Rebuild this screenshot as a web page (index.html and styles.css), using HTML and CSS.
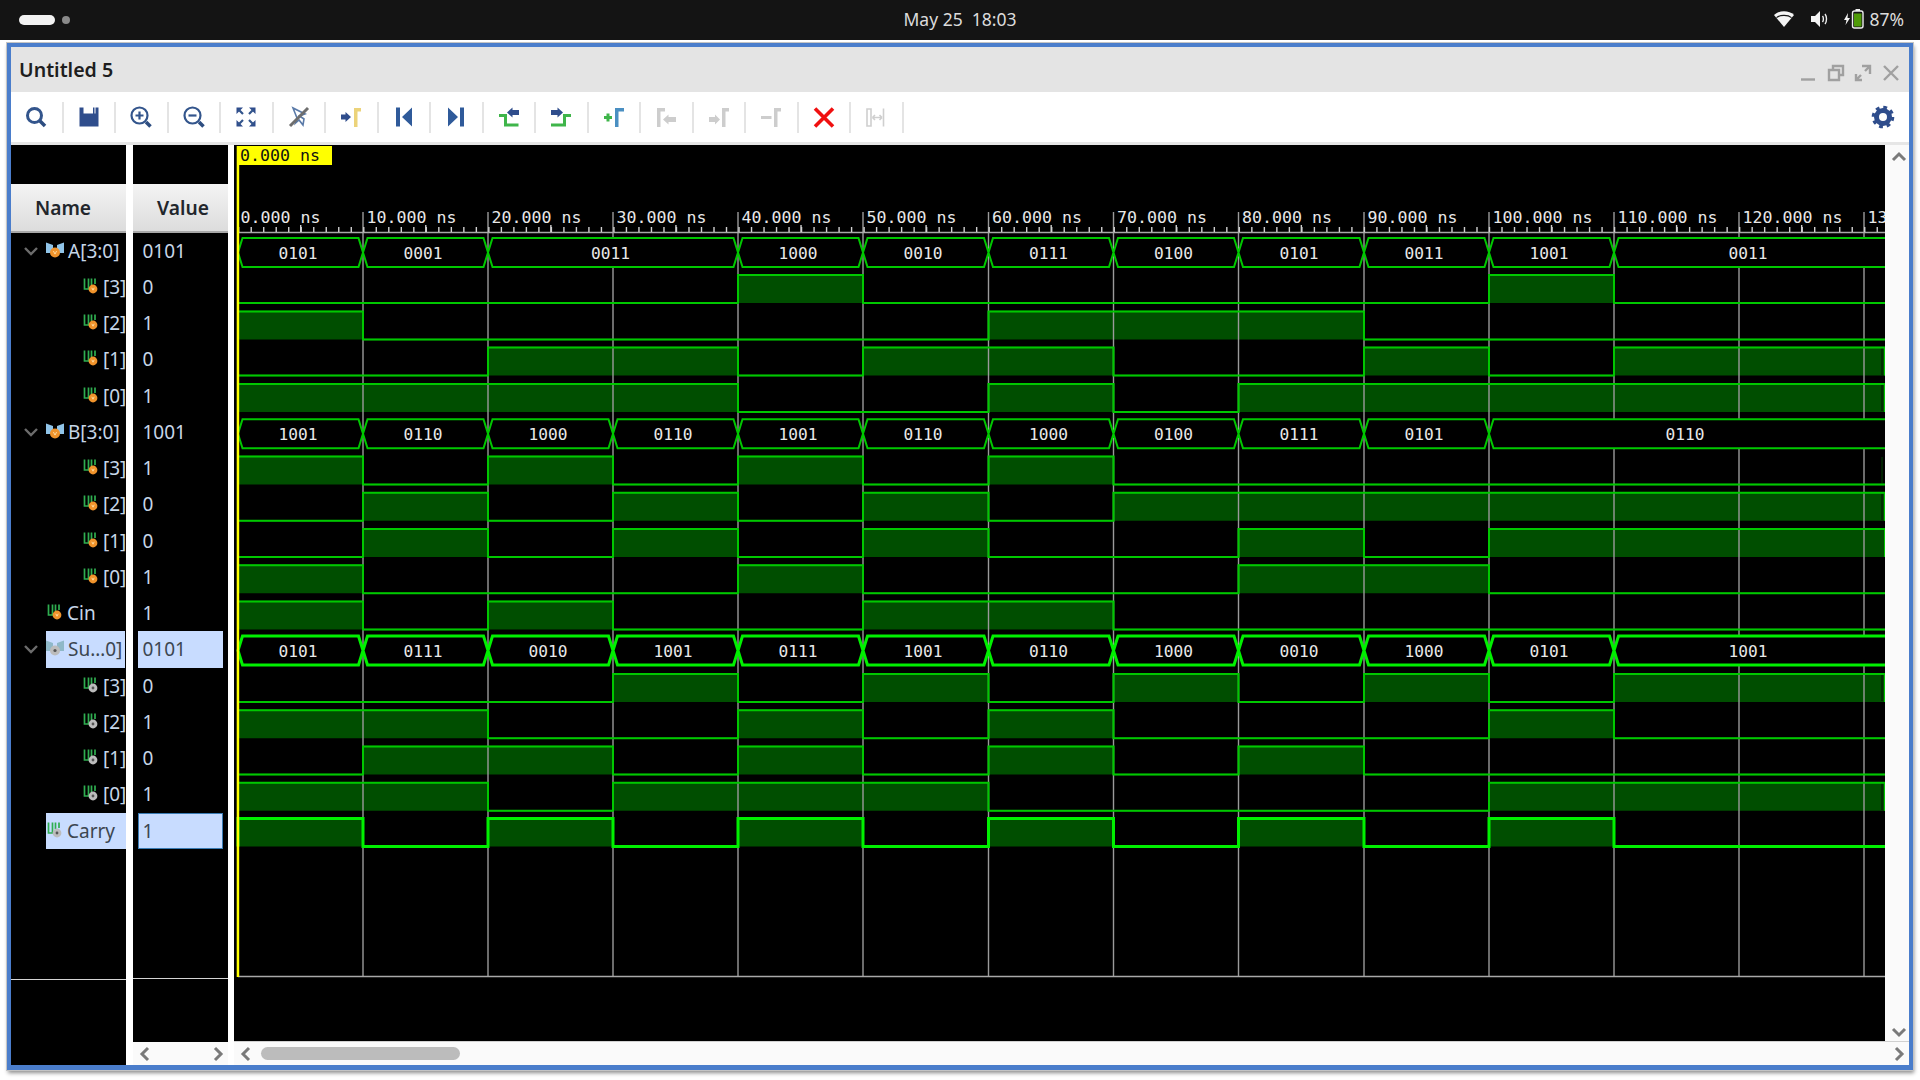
FILE: index.html
```html
<!DOCTYPE html>
<html lang="en">
<head>
<meta charset="utf-8">
<title>Untitled 5</title>
<link rel="stylesheet" href="styles.css">
</head>
<body>
<svg class="defs" aria-hidden="true">
  <symbol id="bus-v" viewBox="0 0 18 16"><path class="ic-wing" d="M0 .5L7 3V11H0ZM18 .5L11 3V11H18Z"/><circle class="ic-orange" cx="9" cy="10.5" r="5"/><path class="ic-mark" d="M7.4 9L9 12.1L10.6 9"/></symbol>
  <symbol id="bus-g" viewBox="0 0 18 16"><path class="ic-wing-g" d="M0 .5L7 3V11H0ZM18 .5L11 3V11H18Z"/><circle class="ic-grey" cx="9" cy="10.5" r="5"/><circle class="ic-dot" cx="9" cy="10.5" r="1.6"/></symbol>
  <symbol id="bit-v" viewBox="0 0 15 16"><path class="ic-green" d="M1.5 .5V11H5.5V.5M8.5 .5V7M12 .5V6"/><circle class="ic-orange" cx="10" cy="11" r="4.4"/><path class="ic-mark" d="M8.8 9.8L10 12.2L11.2 9.8"/></symbol>
  <symbol id="bit-g" viewBox="0 0 15 16"><path class="ic-green" d="M1.5 .5V11H5.5V.5M8.5 .5V7M12 .5V6"/><circle class="ic-grey" cx="10" cy="11" r="4.4"/><circle class="ic-dot" cx="10" cy="11" r="1.4"/></symbol>
  <symbol id="chev" viewBox="0 0 16 16"><path d="M2 5L8 11L14 5"/></symbol>
  <path id="a3" d="M238 0H738V-28H863V0H1489V-28H1614V0H1885"/>
  <path id="a2" d="M238 0V-28H363V0H988.5V-28H1364V0H1885"/>
  <path id="a1" d="M238 0H488V-28H738V0H863V-28H1113.5V0H1364V-28H1489V0H1614V-28H1885V0"/>
  <path id="a0" d="M238 0V-28H738V0H988.5V-28H1113.5V0H1238.5V-28H1885V0"/>
  <path id="b3" d="M238 0V-28H363V0H488V-28H613V0H738V-28H863V0H988.5V-28H1113.5V0H1885"/>
  <path id="b2" d="M238 0H363V-28H488V0H613V-28H738V0H863V-28H988.5V0H1113.5V-28H1885V0"/>
  <path id="b1" d="M238 0H363V-28H488V0H613V-28H738V0H863V-28H988.5V0H1238.5V-28H1364V0H1489V-28H1885V0"/>
  <path id="b0" d="M238 0V-28H363V0H738V-28H863V0H1238.5V-28H1489V0H1885"/>
  <path id="cin" d="M238 0V-28H363V0H488V-28H613V0H863V-28H1113.5V0H1885"/>
  <path id="s3" d="M238 0H613V-28H738V0H863V-28H988.5V0H1113.5V-28H1238.5V0H1364V-28H1489V0H1614V-28H1885V0"/>
  <path id="s2" d="M238 0V-28H488V0H738V-28H863V0H988.5V-28H1113.5V0H1489V-28H1614V0H1885"/>
  <path id="s1" d="M238 0H363V-28H613V0H738V-28H863V0H988.5V-28H1113.5V0H1238.5V-28H1364V0H1885"/>
  <path id="s0" d="M238 0V-28H488V0H613V-28H988.5V0H1489V-28H1885V0"/>
  <path id="carry" d="M238 0V-28H363V0H488V-28H613V0H738V-28H863V0H988.5V-28H1113.5V0H1238.5V-28H1364V0H1489V-28H1614V0H1885"/>
</svg>

<header class="topbar">
  <div class="activities"><span class="pill"></span><span class="dot"></span></div>
  <div class="clock">May 25&nbsp;&nbsp;18:03</div>
  <div class="tray">
    <svg class="tray-wifi" width="20" height="18" viewBox="0 0 20 18"><path class="tray-fill" d="M0 5C5 0 15 0 20 5L10 17Z"/><path class="tray-cut" d="M2.5 7.6C6 4.6 14 4.6 17.5 7.6"/></svg>
    <svg class="tray-sound" width="18" height="20" viewBox="0 0 18 20"><path class="tray-fill" d="M1 7H5L10 2V18L5 13H1Z"/><path class="tray-arc" d="M12.5 7C13.7 8.5 13.7 11.5 12.5 13M15 5C17 7.5 17 12.5 15 15"/></svg>
    <svg class="tray-batt" width="20" height="20" viewBox="0 0 20 20"><path class="tray-fill" d="M4 4L0 11H2.5L1.5 16L6 9H3.5Z"/><rect class="batt-body" x="8.5" y="2" width="10.5" height="17" rx="2"/><rect class="batt-cap" x="11.5" y="0" width="4.5" height="2"/><rect class="batt-level" x="10" y="4.5" width="7.5" height="13"/></svg>
    <span class="tray-text">87%</span>
  </div>
</header>

<main class="window">
  <div class="titlebar">
    <span class="title">Untitled 5</span>
    <div class="winctl">
      <svg width="18" height="18" viewBox="0 0 18 18"><path d="M2 15.5H16"/></svg>
      <svg width="18" height="18" viewBox="0 0 18 18"><path d="M6 6V2H16V11H12M2 6H12V16H2Z"/></svg>
      <svg width="18" height="18" viewBox="0 0 18 18"><path d="M8 2H16V10M16 2L11 7M2 10V16H8M2 16L7 11"/></svg>
      <svg width="18" height="18" viewBox="0 0 18 18"><path d="M2 2L16 16M16 2L2 16"/></svg>
    </div>
  </div>

  <nav class="toolbar">
    <span class="tool"><svg width="24" height="24" viewBox="0 0 24 24"><circle class="st-navy" cx="10.5" cy="10.5" r="7"/><path class="st-navy hv" d="M16 16L21 21"/></svg></span>
    <span class="tool"><svg width="24" height="24" viewBox="0 0 24 24"><path class="fl-navy" d="M2.5 2.5H6.5V8.5H16V2.5H17.5V8.5H18.5V2.5H21.5V21.5H2.5Z"/></svg></span>
    <span class="tool"><svg width="24" height="24" viewBox="0 0 24 24"><circle class="st-navy th" cx="10.5" cy="10.5" r="8"/><path class="st-navy hv" d="M17 17L21.5 21.5"/><path class="st-navy th" d="M6.5 10.5H14.5M10.5 6.5V14.5"/></svg></span>
    <span class="tool"><svg width="24" height="24" viewBox="0 0 24 24"><circle class="st-navy th" cx="10.5" cy="10.5" r="8"/><path class="st-navy hv" d="M17 17L21.5 21.5"/><path class="st-navy th" d="M6.5 10.5H14.5"/></svg></span>
    <span class="tool"><svg width="24" height="24" viewBox="0 0 24 24"><path class="fl-navy" d="M2.5 2.5H9L2.5 9ZM21.5 2.5H15L21.5 9ZM2.5 21.5H9L2.5 15ZM21.5 21.5H15L21.5 15Z"/><path class="st-navy th" d="M4.5 4.5L9 9M19.5 4.5L15 9M4.5 19.5L9 15M19.5 19.5L15 15"/></svg></span>
    <span class="tool"><svg width="24" height="24" viewBox="0 0 24 24"><path class="st-slate" d="M6 3L10 13L8.5 18L12 15L16 20L17 14L12.5 11L18 9Z"/><path class="st-grey-d" d="M3 21L21 3"/></svg></span>
    <span class="tool"><svg width="24" height="24" viewBox="0 0 24 24"><path class="fl-navy" d="M2 9.5H6.5V7L12 12L6.5 17V14.5H2Z"/><path class="fl-yellow" d="M15 22V3H22V6.5H18.5V22Z"/></svg></span>
    <span class="tool"><svg width="24" height="24" viewBox="0 0 24 24"><path class="fl-blue" d="M4 2.5H8V21.5H4ZM20 2.5V21.5L10 12Z"/></svg></span>
    <span class="tool"><svg width="24" height="24" viewBox="0 0 24 24"><path class="fl-blue" d="M20 2.5H16V21.5H20ZM4 2.5V21.5L14 12Z"/></svg></span>
    <span class="tool"><svg width="24" height="24" viewBox="0 0 24 24"><path class="st-lime" d="M2 10.5H8.5V20H21.5"/><path class="fl-navy" d="M10 7.5L15.5 2.5V5H22V10H15.5V12.5Z"/></svg></span>
    <span class="tool"><svg width="24" height="24" viewBox="0 0 24 24"><path class="st-lime" d="M2 20H15.5V10.5H22"/><path class="fl-navy" d="M14 7.5L8.5 2.5V5H2V10H8.5V12.5Z"/></svg></span>
    <span class="tool"><svg width="24" height="24" viewBox="0 0 24 24"><path class="st-lime" d="M2 12.5H10M6 8.5V16.5"/><path class="fl-sky" d="M13 22V3H22V6.5H16.5V22Z"/></svg></span>
    <span class="tool"><svg width="24" height="24" viewBox="0 0 24 24"><path class="fl-off" d="M3 22V3H11V6.5H6.5V22ZM9 14.5L14.5 9.5V12H22V17H14.5V19.5Z"/></svg></span>
    <span class="tool"><svg width="24" height="24" viewBox="0 0 24 24"><path class="fl-off" d="M15 22V3H22V6.5H18.5V22ZM13 14.5L8 9.5V12H2V17H8V19.5Z"/></svg></span>
    <span class="tool"><svg width="24" height="24" viewBox="0 0 24 24"><path class="fl-off" d="M15 22V3H22V6.5H18.5V22ZM2 11H12.5V14H2Z"/></svg></span>
    <span class="tool"><svg width="24" height="24" viewBox="0 0 24 24"><path class="st-red" d="M3 3.5L21 21.5M21 3.5L3 21.5"/></svg></span>
    <span class="tool"><svg width="24" height="24" viewBox="0 0 24 24"><path class="st-off" d="M3 4H7V21H3ZM19.5 3.5V21.5M8.5 12.5H18M8.5 12.5L11 10M8.5 12.5L11 15M18 12.5L15.5 10M18 12.5L15.5 15"/></svg></span>
    <span class="tool-gear"><svg width="24" height="24" viewBox="0 0 24 24"><circle class="gear-ring" cx="12" cy="12" r="6.5"/><circle class="gear-teeth" cx="12" cy="12" r="9.5"/></svg></span>
  </nav>

  <section class="panes">
    <div class="pane pane-name">
      <div class="pane-spacer"></div>
      <div class="head head-name">Name</div>
      <div class="rows">
        <div class="row"><svg class="chev"><use href="#chev"/></svg><div class="cell"><svg class="ic-bus"><use href="#bus-v"/></svg><span>A[3:0]</span></div></div>
        <div class="row"><span class="nochev"></span><div class="cell bit"><svg class="ic-bit"><use href="#bit-v"/></svg><span>[3]</span></div></div>
        <div class="row"><span class="nochev"></span><div class="cell bit"><svg class="ic-bit"><use href="#bit-v"/></svg><span>[2]</span></div></div>
        <div class="row"><span class="nochev"></span><div class="cell bit"><svg class="ic-bit"><use href="#bit-v"/></svg><span>[1]</span></div></div>
        <div class="row"><span class="nochev"></span><div class="cell bit"><svg class="ic-bit"><use href="#bit-v"/></svg><span>[0]</span></div></div>
        <div class="row"><svg class="chev"><use href="#chev"/></svg><div class="cell"><svg class="ic-bus"><use href="#bus-v"/></svg><span>B[3:0]</span></div></div>
        <div class="row"><span class="nochev"></span><div class="cell bit"><svg class="ic-bit"><use href="#bit-v"/></svg><span>[3]</span></div></div>
        <div class="row"><span class="nochev"></span><div class="cell bit"><svg class="ic-bit"><use href="#bit-v"/></svg><span>[2]</span></div></div>
        <div class="row"><span class="nochev"></span><div class="cell bit"><svg class="ic-bit"><use href="#bit-v"/></svg><span>[1]</span></div></div>
        <div class="row"><span class="nochev"></span><div class="cell bit"><svg class="ic-bit"><use href="#bit-v"/></svg><span>[0]</span></div></div>
        <div class="row"><span class="nochev"></span><div class="cell"><svg class="ic-bit ic-top"><use href="#bit-v"/></svg><span>Cin</span></div></div>
        <div class="row"><svg class="chev"><use href="#chev"/></svg><div class="cell sel"><svg class="ic-bus"><use href="#bus-g"/></svg><span>Su…0]</span></div></div>
        <div class="row"><span class="nochev"></span><div class="cell bit"><svg class="ic-bit"><use href="#bit-g"/></svg><span>[3]</span></div></div>
        <div class="row"><span class="nochev"></span><div class="cell bit"><svg class="ic-bit"><use href="#bit-g"/></svg><span>[2]</span></div></div>
        <div class="row"><span class="nochev"></span><div class="cell bit"><svg class="ic-bit"><use href="#bit-g"/></svg><span>[1]</span></div></div>
        <div class="row"><span class="nochev"></span><div class="cell bit"><svg class="ic-bit"><use href="#bit-g"/></svg><span>[0]</span></div></div>
        <div class="row"><span class="nochev"></span><div class="cell sel sel-full"><svg class="ic-bit ic-top"><use href="#bit-g"/></svg><span>Carry</span></div></div>
      </div>
      <div class="pane-foot foot-name"></div>
    </div>

    <div class="pane pane-value">
      <div class="pane-spacer"></div>
      <div class="head head-value">Value</div>
      <div class="rows">
        <div class="vrow"><span class="val">0101</span></div>
        <div class="vrow"><span class="val">0</span></div>
        <div class="vrow"><span class="val">1</span></div>
        <div class="vrow"><span class="val">0</span></div>
        <div class="vrow"><span class="val">1</span></div>
        <div class="vrow"><span class="val">1001</span></div>
        <div class="vrow"><span class="val">1</span></div>
        <div class="vrow"><span class="val">0</span></div>
        <div class="vrow"><span class="val">0</span></div>
        <div class="vrow"><span class="val">1</span></div>
        <div class="vrow"><span class="val">1</span></div>
        <div class="vrow"><span class="val sel">0101</span></div>
        <div class="vrow"><span class="val">0</span></div>
        <div class="vrow"><span class="val">1</span></div>
        <div class="vrow"><span class="val">0</span></div>
        <div class="vrow"><span class="val">1</span></div>
        <div class="vrow"><span class="val sel focus">1</span></div>
      </div>
      <div class="pane-foot foot-value"></div>
      <div class="hscroll hscroll-value">
        <svg class="chv" viewBox="0 0 16 16"><path d="M11 2L5 8L11 14"/></svg>
        <svg class="chv" viewBox="0 0 16 16"><path d="M5 2L11 8L5 14"/></svg>
      </div>
    </div>

    <div class="pane-wave">
      <div class="wave-top">
        <svg class="wave" viewBox="234 145 1651 896" width="1651" height="896">
          <!-- fills -->
          <g class="w-fill">
            <use href="#a3" y="303"/><use href="#a2" y="339.5"/><use href="#a1" y="375.5"/><use href="#a0" y="412"/>
            <use href="#b3" y="484.5"/><use href="#b2" y="520.75"/><use href="#b1" y="557"/><use href="#b0" y="593.25"/>
            <use href="#cin" y="629.5"/>
            <use href="#s3" y="702"/><use href="#s2" y="738.25"/><use href="#s1" y="774.5"/><use href="#s0" y="810.75"/>
            <use href="#carry" y="846.5"/>
          </g>
          <path class="w-tail" d="M1882 348V375M1882 385V411M1882 457V484M1882 494V520M1882 675V701M1882 783V810"/>
          <!-- grid -->
          <path class="w-grid" d="M363 212V976M488 212V976M613 212V976M738 212V976M863 212V976M988.5 212V976M1113.5 212V976M1238.5 212V976M1364 212V976M1489 212V976M1614 212V976M1739 212V976M1864 212V976"/>
          <path class="w-base" d="M238 232.5H1885M238 976.5H1885"/>
          <line class="w-tick" x1="238" x2="1885" y1="229.5" y2="229.5"/>
          <line class="w-tick5" x1="300" x2="1885" y1="228.5" y2="228.5"/>
          <!-- digital traces -->
          <g class="w-line">
            <use href="#a3" y="303"/><use href="#a2" y="339.5"/><use href="#a1" y="375.5"/><use href="#a0" y="412"/>
            <use href="#b3" y="484.5"/><use href="#b2" y="520.75"/><use href="#b1" y="557"/><use href="#b0" y="593.25"/>
            <use href="#cin" y="629.5"/>
            <use href="#s3" y="702"/><use href="#s2" y="738.25"/><use href="#s1" y="774.5"/><use href="#s0" y="810.75"/>
          </g>
          <g class="w-line w-sel"><use href="#carry" y="846.5"/></g>
          <!-- buses -->
          <g class="w-bus" transform="translate(0 252.5)">
            <path d="M238 0l4.5-14.5H358.5l4.5 14.5l-4.5 14.5H242.5ZM363 0l4.5-14.5H483.5l4.5 14.5l-4.5 14.5H367.5ZM488 0l4.5-14.5H733.5l4.5 14.5l-4.5 14.5H492.5ZM738 0l4.5-14.5H858.5l4.5 14.5l-4.5 14.5H742.5ZM863 0l4.5-14.5H984l4.5 14.5l-4.5 14.5H867.5ZM988.5 0l4.5-14.5H1109l4.5 14.5l-4.5 14.5H993ZM1113.5 0l4.5-14.5H1234l4.5 14.5l-4.5 14.5H1118ZM1238.5 0l4.5-14.5H1359.5l4.5 14.5l-4.5 14.5H1243ZM1364 0l4.5-14.5H1484.5l4.5 14.5l-4.5 14.5H1368.5ZM1489 0l4.5-14.5H1609.5l4.5 14.5l-4.5 14.5H1493.5ZM1614 0l4.5-14.5H1890V14.5H1618.5Z"/>
          </g>
          <g class="w-bus" transform="translate(0 433.75)">
            <path d="M238 0l4.5-14.5H358.5l4.5 14.5l-4.5 14.5H242.5ZM363 0l4.5-14.5H483.5l4.5 14.5l-4.5 14.5H367.5ZM488 0l4.5-14.5H608.5l4.5 14.5l-4.5 14.5H492.5ZM613 0l4.5-14.5H733.5l4.5 14.5l-4.5 14.5H617.5ZM738 0l4.5-14.5H858.5l4.5 14.5l-4.5 14.5H742.5ZM863 0l4.5-14.5H984l4.5 14.5l-4.5 14.5H867.5ZM988.5 0l4.5-14.5H1109l4.5 14.5l-4.5 14.5H993ZM1113.5 0l4.5-14.5H1234l4.5 14.5l-4.5 14.5H1118ZM1238.5 0l4.5-14.5H1359.5l4.5 14.5l-4.5 14.5H1243ZM1364 0l4.5-14.5H1484.5l4.5 14.5l-4.5 14.5H1368.5ZM1489 0l4.5-14.5H1890V14.5H1493.5Z"/>
          </g>
          <g class="w-bus w-sel" transform="translate(0 650.5)">
            <path d="M238 0l4.5-14.5H358.5l4.5 14.5l-4.5 14.5H242.5ZM363 0l4.5-14.5H483.5l4.5 14.5l-4.5 14.5H367.5ZM488 0l4.5-14.5H608.5l4.5 14.5l-4.5 14.5H492.5ZM613 0l4.5-14.5H733.5l4.5 14.5l-4.5 14.5H617.5ZM738 0l4.5-14.5H858.5l4.5 14.5l-4.5 14.5H742.5ZM863 0l4.5-14.5H984l4.5 14.5l-4.5 14.5H867.5ZM988.5 0l4.5-14.5H1109l4.5 14.5l-4.5 14.5H993ZM1113.5 0l4.5-14.5H1234l4.5 14.5l-4.5 14.5H1118ZM1238.5 0l4.5-14.5H1359.5l4.5 14.5l-4.5 14.5H1243ZM1364 0l4.5-14.5H1484.5l4.5 14.5l-4.5 14.5H1368.5ZM1489 0l4.5-14.5H1609.5l4.5 14.5l-4.5 14.5H1493.5ZM1614 0l4.5-14.5H1890V14.5H1618.5Z"/>
          </g>
          <!-- bus labels -->
          <g class="w-text w-mid">
            <text x="298" y="258.5">0101</text><text x="423" y="258.5">0001</text><text x="610.5" y="258.5">0011</text><text x="798" y="258.5">1000</text><text x="923" y="258.5">0010</text><text x="1048.5" y="258.5">0111</text><text x="1173.5" y="258.5">0100</text><text x="1299" y="258.5">0101</text><text x="1424" y="258.5">0011</text><text x="1549" y="258.5">1001</text><text x="1748" y="258.5">0011</text>
            <text x="298" y="439.5">1001</text><text x="423" y="439.5">0110</text><text x="548" y="439.5">1000</text><text x="673" y="439.5">0110</text><text x="798" y="439.5">1001</text><text x="923" y="439.5">0110</text><text x="1048.5" y="439.5">1000</text><text x="1173.5" y="439.5">0100</text><text x="1299" y="439.5">0111</text><text x="1424" y="439.5">0101</text><text x="1685" y="439.5">0110</text>
            <text x="298" y="656.5">0101</text><text x="423" y="656.5">0111</text><text x="548" y="656.5">0010</text><text x="673" y="656.5">1001</text><text x="798" y="656.5">0111</text><text x="923" y="656.5">1001</text><text x="1048.5" y="656.5">0110</text><text x="1173.5" y="656.5">1000</text><text x="1299" y="656.5">0010</text><text x="1424" y="656.5">1000</text><text x="1549" y="656.5">0101</text><text x="1748" y="656.5">1001</text>
          </g>
          <!-- ruler labels -->
          <g class="w-text w-ruler">
            <text x="240.5" y="222.5">0.000 ns</text><text x="366.5" y="222.5">10.000 ns</text><text x="491.5" y="222.5">20.000 ns</text><text x="616.5" y="222.5">30.000 ns</text><text x="741.5" y="222.5">40.000 ns</text><text x="866.5" y="222.5">50.000 ns</text><text x="992" y="222.5">60.000 ns</text><text x="1117" y="222.5">70.000 ns</text><text x="1242" y="222.5">80.000 ns</text><text x="1367.5" y="222.5">90.000 ns</text><text x="1492.5" y="222.5">100.000 ns</text><text x="1617.5" y="222.5">110.000 ns</text><text x="1742.5" y="222.5">120.000 ns</text><text x="1867.5" y="222.5">13</text>
          </g>
          <!-- cursor -->
          <rect class="w-cursor" x="236.7" y="146" width="2.5" height="831"/>
          <rect class="w-cursor" x="237" y="146" width="95" height="19"/>
          <text class="w-text w-cursor-label" x="240" y="161">0.000 ns</text>
        </svg>
        <div class="vscroll">
          <svg class="chv" viewBox="0 0 16 16"><path d="M2 11L8 5L14 11"/></svg>
          <svg class="chv" viewBox="0 0 16 16"><path d="M2 5L8 11L14 5"/></svg>
        </div>
      </div>
      <div class="hscroll hscroll-wave">
        <svg class="chv" viewBox="0 0 16 16"><path d="M11 2L5 8L11 14"/></svg>
        <span class="thumb"></span>
        <svg class="chv chv-end" viewBox="0 0 16 16"><path d="M5 2L11 8L5 14"/></svg>
      </div>
    </div>
  </section>
</main>
</body>
</html>
```
FILE: styles.css
```css
* { box-sizing: border-box; }
html, body { margin: 0; padding: 0; }
body {
  width: 1920px;
  height: 1080px;
  overflow: hidden;
  background: #fff;
  font-family: "Noto Sans", "Open Sans", sans-serif;
  display: flex;
  flex-direction: column;
}
.defs { position: absolute; width: 0; height: 0; }

/* top shell bar */
.topbar {
  height: 40px;
  flex: none;
  background: #141414;
  display: grid;
  grid-template-columns: 1fr auto 1fr;
  align-items: center;
  color: #dcdcdc;
}
.activities { display: flex; align-items: center; gap: 7px; padding-left: 19px; }
.pill { width: 36px; height: 10px; border-radius: 5px; background: #f2f2f2; }
.dot { width: 8px; height: 8px; border-radius: 50%; background: #8a8a8a; }
.clock { font-size: 17.5px; padding-bottom: 3px; }
.tray { display: flex; align-items: center; justify-content: flex-end; padding: 0 16px 2px 0; }
.tray-wifi { margin-right: 16px; }
.tray-sound { margin-right: 16px; }
.tray-batt { margin-right: 5px; }
.tray-text { font-size: 17.5px; }
.tray-fill { fill: #f4f4f4; }
.tray-cut { fill: none; stroke: #141414; stroke-width: 1.2; }
.tray-arc { fill: none; stroke: #eee; stroke-width: 1.4; }
.batt-body { fill: #141414; stroke: #eee; stroke-width: 1.4; }
.batt-cap { fill: #eee; }
.batt-level { fill: #4e9a06; }

/* window */
.window {
  margin: 3px 7px 0;
  height: 1027px;
  flex: none;
  border: 4px solid #4a7dcb;
  border-bottom-width: 5px;
  background: #fff;
  display: flex;
  flex-direction: column;
  box-shadow: 0 0 0 1px #c4c4c4, 1px 3px 4px rgba(0, 0, 0, .45);
}
.titlebar {
  height: 45px;
  flex: none;
  background: #e4e4e4;
  display: flex;
  align-items: center;
  justify-content: space-between;
  padding-left: 8px;
}
.title { font-size: 19.6px; font-weight: 600; color: #1e1e1e; }
.winctl { display: flex; gap: 9.6px; padding: 6px 9px 0 0; }
.winctl path { fill: none; stroke: #a0a0a0; stroke-width: 2.4; }

/* toolbar */
.toolbar {
  height: 53px;
  flex: none;
  background: #fff;
  border-bottom: 3px solid #e6e6e6;
  display: flex;
  align-items: center;
}
.tool {
  width: 52.5px;
  height: 31px;
  flex: none;
  border-right: 2px solid #e4e4e4;
  display: flex;
  align-items: center;
  justify-content: center;
}
.tool-gear { margin-left: auto; margin-right: 14px; height: 24px; }
.st-navy, .st-slate, .st-lime, .st-red, .st-off, .st-grey-d { fill: none; }
.st-navy { stroke: #33558c; stroke-width: 3; }
.st-navy.th { stroke-width: 2.2; }
.st-navy.hv { stroke-width: 3.6; stroke: #2d4d80; }
.st-slate { stroke: #5a7aa8; stroke-width: 1.6; }
.st-grey-d { stroke: #6e6e6e; stroke-width: 3; }
.st-lime { stroke: #3fb54a; stroke-width: 3; }
.st-red { stroke: #f01010; stroke-width: 3.6; }
.st-off { stroke: #cfcfcf; stroke-width: 1.6; }
.fl-navy { fill: #2f4d8c; }
.fl-blue { fill: #2f5a9a; }
.fl-yellow { fill: #ecd37a; }
.fl-sky { fill: #4a8fc2; }
.fl-off { fill: #cdcdcd; }
.gear-ring { fill: none; stroke: #2f4d8c; stroke-width: 5; }
.gear-teeth { fill: none; stroke: #2f4d8c; stroke-width: 3.6; stroke-dasharray: 3.7 3.76; }

/* panes */
.panes {
  flex: 1;
  min-height: 0;
  display: flex;
  background: #fff;
}
.pane { display: flex; flex-direction: column; flex: none; }
.pane-name { width: 115px; background: #000; margin-right: 7px; }
.pane-value { width: 95px; margin-right: 6px; }
.pane-spacer { height: 39px; flex: none; background: #000; }
.head {
  height: 48.5px;
  flex: none;
  display: flex;
  align-items: center;
  justify-content: center;
  font-size: 19.2px;
  font-weight: 600;
  color: #22262c;
  background: linear-gradient(#f4f4f4, #dcdcdc);
  border-bottom: 2px solid #a8a8a8;
}
.head-name { padding-right: 11px; }
.head-value { padding-left: 5px; }
.rows {
  flex: 1;
  background: #000;
  color: #c6d6e8;
  font-size: 19px;
  border-bottom: 1.5px solid #d4d4d4;
}
.row { height: 36.25px; display: flex; align-items: stretch; overflow: hidden; }
.chev { width: 16px; height: 16px; flex: none; margin: 10px 7px 0 12px; fill: none; stroke: #6c6c6c; stroke-width: 2.4; }
.nochev { width: 35px; flex: none; }
.cell {
  flex: 1;
  min-width: 0;
  display: flex;
  align-items: center;
  gap: 4px;
  white-space: nowrap;
  overflow: hidden;
  height: 36.25px;
}
.cell.bit { padding-left: 37px; gap: 5px; }
.cell.sel { background: #c8dcff; color: #3c4650; margin-right: 1px; }
.cell.sel-full { margin-right: 0; }
.ic-bus { width: 18px; height: 16px; flex: none; margin-top: -2px; }
.ic-bit { width: 15px; height: 16px; flex: none; margin-top: -2px; }
.ic-top { margin-left: 1px; margin-right: 1px; }
.ic-wing { fill: #90c4e8; }
.ic-wing-g { fill: #8fb8c8; }
.ic-orange { fill: #f0932b; }
.ic-grey { fill: #bcbcbc; }
.ic-dot { fill: #555; }
.ic-mark { fill: none; stroke: #ffe0a8; stroke-width: .9; }
.ic-green { fill: none; stroke: #2fae50; stroke-width: 1.7; }

.vrow { height: 36.25px; padding: 0 5.5px 0 4.5px; display: flex; }
.val { flex: 1; display: flex; align-items: center; padding-left: 5px; }
.val.sel { background: #c8dcff; color: #3c4650; }
.val.focus { border: 1.5px solid #3a7cb4; padding-left: 4px; }
.pane-foot { flex: none; background: #000; }
.foot-name { height: 85px; }
.foot-value { height: 63px; }

/* scrollbars */
.hscroll {
  height: 23px;
  flex: none;
  background: #fafafa;
  display: flex;
  align-items: center;
}
.hscroll-value { justify-content: space-between; padding: 0 2px 0 4px; }
.hscroll-wave { padding: 0 2px 0 4px; }
.chv { width: 16px; height: 16px; flex: none; }
.chv path { fill: none; stroke: #7a7a7a; stroke-width: 3; }
.chv-end { margin-left: auto; }
.thumb { width: 199px; height: 13px; border-radius: 6.5px; background: #bcbcbc; margin-left: 7px; }

.pane-wave { flex: 1; min-width: 0; display: flex; flex-direction: column; }
.wave-top { height: 897px; flex: none; display: flex; border-bottom: 1px solid #d0d0d0; }
.wave { display: block; flex: none; background: #000; }
.vscroll {
  flex: 1;
  background: #fafafa;
  display: flex;
  flex-direction: column;
  justify-content: space-between;
  align-items: center;
  padding: 4px 0 1px 3px;
}

/* waveform */
.w-fill { fill: #004e00; stroke: #006a00; stroke-width: 1.5; }
.w-tail { fill: none; stroke: #002800; stroke-width: 1.6; }
.w-grid { fill: none; stroke: #9a9a9a; stroke-width: 1.4; }
.w-base { fill: none; stroke: #a8a8a8; stroke-width: 1.6; }
.w-tick { fill: none; stroke: #d0d0d0; stroke-width: 5; stroke-dasharray: 1.4 11.108; stroke-dashoffset: 0; }
.w-tick5 { fill: none; stroke: #d0d0d0; stroke-width: 7; stroke-dasharray: 1.4 123.68; }
.w-line { fill: none; stroke: #00c800; stroke-width: 2; }
.w-line.w-sel { stroke: #00f000; stroke-width: 3; }
.w-bus path { fill: #000; stroke: #00c800; stroke-width: 2; }
.w-bus.w-sel path { stroke: #00f000; stroke-width: 3; }
.w-text text, .w-text { font-family: "DejaVu Sans Mono", "Liberation Mono", monospace; font-size: 16.2px; fill: #e8e8e8; }
.w-ruler text, .w-cursor-label.w-text { font-size: 16.6px; }
.w-mid text { text-anchor: middle; }
.w-cursor { fill: #ffff00; }
.w-cursor-label.w-text { fill: #111; }
```
